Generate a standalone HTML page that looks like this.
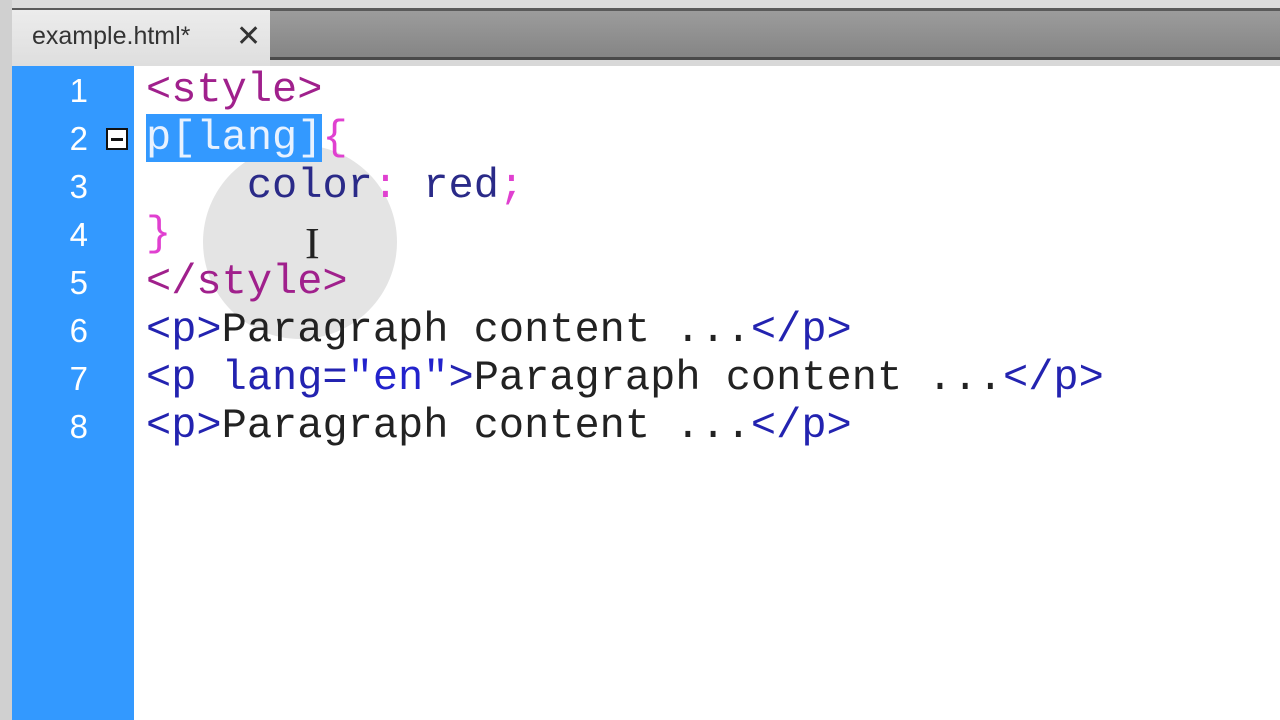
<!DOCTYPE html>
<html><head><style>
body{margin:0;width:1280px;height:720px;overflow:hidden;background:#fff;position:relative;font-family:"Liberation Sans",sans-serif}
.top{position:absolute;left:0;top:0;width:1280px;height:9px;background:#dcdcdc}
.bar{position:absolute;left:0;top:8px;width:1280px;height:52px;background:linear-gradient(#9c9c9c,#858585);border-top:3px solid #5a5a5a;border-bottom:3px solid #4a4a4a;box-sizing:border-box}
.below{position:absolute;left:0;top:60px;width:1280px;height:6px;background:#d8d8d8}
.lb{position:absolute;left:0;top:0;width:12px;height:720px;background:#d0d0d0}
.tab{position:absolute;left:12px;top:10px;width:258px;height:56px;background:linear-gradient(#ececec,#dedede);font-size:25px;color:#333}
.tab span{position:absolute;left:20px;top:12px}
.tab b{position:absolute;left:224px;top:9px;font-weight:normal;font-size:30px}
.gut{position:absolute;left:12px;top:66px;width:122px;height:654px;background:#3399ff}
.num{position:absolute;right:1192px;color:#fff;font-size:33px;width:60px;text-align:right}
.circ{position:absolute;left:203px;top:145px;width:194px;height:194px;border-radius:50%;background:#e4e4e4}
.code{position:absolute;left:146px;top:66px;font-family:"Liberation Mono",monospace;font-size:42px;line-height:48px;white-space:pre;color:#222}
.t{color:#a0208c}.k{color:#2a2a88}.m{color:#e040d0}.b{color:#2323b0}.v{color:#2222cc}
.sel{background:#3399ff;color:#e8f2ff}
.fold{position:absolute;left:106px;top:128px;width:18px;height:18px;border:2px solid #111;background:#fff}
.fold:after{content:"";position:absolute;left:3px;top:8px;width:12px;height:3px;background:#111}
</style></head><body>
<div class="top"></div><div class="bar"></div><div class="below"></div><div class="lb"></div>
<div class="tab"><span>example.html*</span><b>✕</b></div>
<div class="gut"></div>
<div class="num" style="top:72px">1</div>
<div class="num" style="top:120px">2</div>
<div class="num" style="top:168px">3</div>
<div class="num" style="top:216px">4</div>
<div class="num" style="top:264px">5</div>
<div class="num" style="top:312px">6</div>
<div class="num" style="top:360px">7</div>
<div class="num" style="top:408px">8</div>
<div class="fold"></div>
<div class="circ"></div>
<div class="code"><span class="t">&lt;style&gt;</span>
<span class="sel">p[lang]</span><span class="m">{</span>
    <span class="k">color</span><span class="m">:</span> <span class="k">red</span><span class="m">;</span>
<span class="m">}</span>
<span class="t">&lt;/style&gt;</span>
<span class="b">&lt;p&gt;</span>Paragraph content ...<span class="b">&lt;/p&gt;</span>
<span class="b">&lt;p lang=</span><span class="v">"en"</span><span class="b">&gt;</span>Paragraph content ...<span class="b">&lt;/p&gt;</span>
<span class="b">&lt;p&gt;</span>Paragraph content ...<span class="b">&lt;/p&gt;</span></div>
<div style="position:absolute;left:305px;top:222px;font-family:'Liberation Serif',serif;font-size:44px;color:#222;line-height:44px">I</div>
</body></html>
